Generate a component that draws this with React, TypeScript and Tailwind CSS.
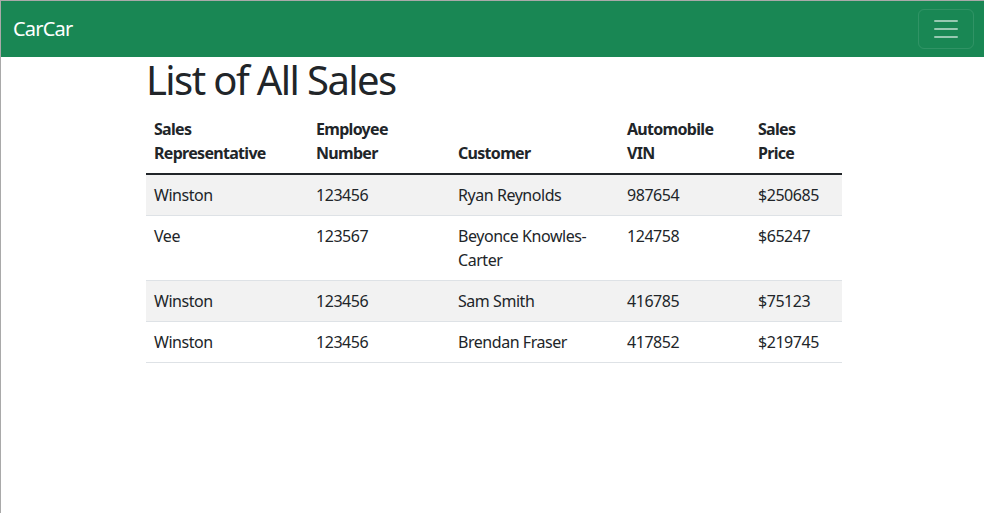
import React from 'react';

interface Sale {
  rep: string;
  employee: string;
  customer: string;
  vin: string;
  price: string;
}

const sales: Sale[] = [
  { rep: 'Winston', employee: '123456', customer: 'Ryan Reynolds', vin: '987654', price: '$250685' },
  { rep: 'Vee', employee: '123567', customer: 'Beyonce Knowles-Carter', vin: '124758', price: '$65247' },
  { rep: 'Winston', employee: '123456', customer: 'Sam Smith', vin: '416785', price: '$75123' },
  { rep: 'Winston', employee: '123456', customer: 'Brendan Fraser', vin: '417852', price: '$219745' },
];

const App: React.FC = () => {
  return (
    <div
      className="min-h-[513px] bg-white border-t border-l border-[#a9a9a9] text-[#212529]"
      style={{ fontFamily: '"Noto Sans", "Open Sans", sans-serif' }}
    >
      {/* Navbar */}
      <nav className="h-[56px] bg-[#198754] flex items-center justify-between pl-[12px] pr-[10px]">
        <span className="text-white text-[20px] leading-[30px] tracking-[-0.8px]">CarCar</span>
        <button className="w-[56px] h-[40px] border border-white/10 rounded-[6px] flex items-center justify-center">
          <svg width="30" height="30" viewBox="0 0 30 30">
            <path
              d="M4 7h22M4 15h22M4 23h22"
              stroke="rgba(255,255,255,0.55)"
              strokeWidth="2"
              strokeLinecap="round"
            />
          </svg>
        </button>
      </nav>

      {/* Content */}
      <div className="w-[696px] ml-[145px]">
        <h1 className="text-[40px] leading-[48px] font-normal tracking-[-1.6px] mb-[5px] -mt-[1px]">List of All Sales</h1>
        <table className="w-full text-[16px] leading-[24px] tracking-[-0.45px] border-collapse">
          <thead>
            <tr className="align-bottom">
              <th className="w-[162px] p-[8px] text-left font-bold tracking-[-0.7px]">Sales<br />Representative</th>
              <th className="w-[142px] p-[8px] text-left font-bold tracking-[-0.7px]">Employee<br />Number</th>
              <th className="w-[169px] p-[8px] text-left font-bold tracking-[-0.7px]">Customer</th>
              <th className="w-[131px] p-[8px] text-left font-bold tracking-[-0.7px]">Automobile<br />VIN</th>
              <th className="w-[92px] p-[8px] text-left font-bold tracking-[-0.7px]">Sales<br />Price</th>
            </tr>
          </thead>
          <tbody className="border-t-2 border-[#212529]">
            {sales.map((s, i) => (
              <tr
                key={i}
                className={`align-top border-b border-[#dee2e6] ${i % 2 === 0 ? 'bg-[#f2f2f2]' : 'bg-white'}`}
              >
                <td className="p-[8px]">{s.rep}</td>
                <td className="p-[8px]">{s.employee}</td>
                <td className="p-[8px]">{s.customer}</td>
                <td className="p-[8px]">{s.vin}</td>
                <td className="p-[8px]">{s.price}</td>
              </tr>
            ))}
          </tbody>
        </table>
      </div>
    </div>
  );
};

export default App;
